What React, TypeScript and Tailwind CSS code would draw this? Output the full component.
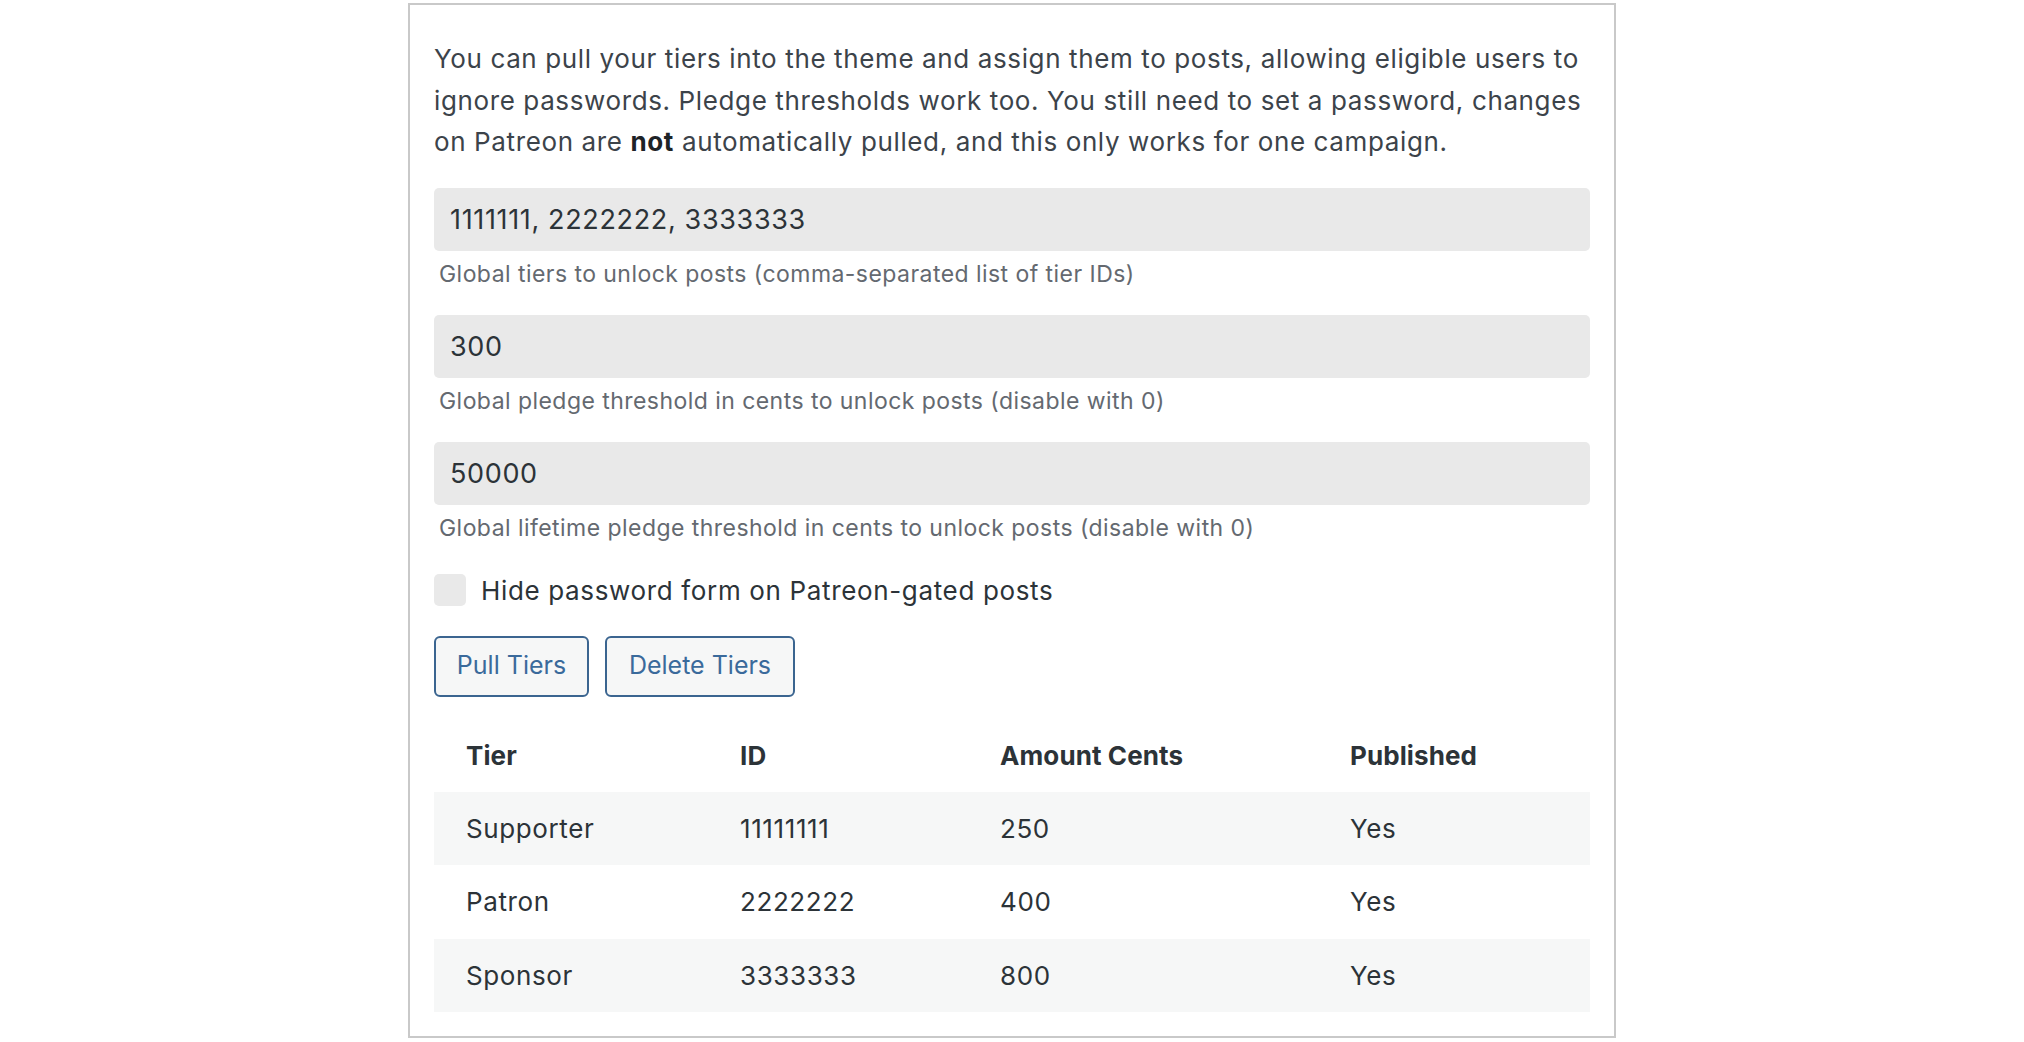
import React from "react";

type Tier = {
  name: string;
  id: string;
  amount: string;
  published: string;
};

const tiers: Tier[] = [
  { name: "Supporter", id: "11111111", amount: "250", published: "Yes" },
  { name: "Patron", id: "2222222", amount: "400", published: "Yes" },
  { name: "Sponsor", id: "3333333", amount: "800", published: "Yes" },
];

const Field: React.FC<{ value: string; help: string }> = ({ value, help }) => {
  return (
    <div className="flex flex-col">
      <div className="h-[63px] rounded-[5px] bg-[#e9e9e9] pl-[16px] pt-[2px] flex items-center text-[27px] tracking-[0.65px] text-[#2c3338]">
        {value}
      </div>
      <p className="mt-[6px] pl-[5px] text-[23px] tracking-[0.45px] leading-[34px] text-[#646970]">{help}</p>
    </div>
  );
};

const App: React.FC = () => {
  return (
    <div className="min-h-screen bg-white pt-[3px] font-['Inter','Liberation_Sans',sans-serif]">
      <div className="mx-auto w-[1208px] border-2 border-[#c9c9c9] bg-white px-[24px] pt-[33px] pb-[24px]">
        <p className="text-[26px] tracking-[0.62px] leading-[41.5px] text-[#3c434a]">
          <span className="block whitespace-nowrap">
            You can pull your tiers into the theme and assign them to posts, allowing eligible users to
          </span>
          <span className="block whitespace-nowrap">
            ignore passwords. Pledge thresholds work too. You still need to set a password, changes
          </span>
          <span className="block whitespace-nowrap">
            on Patreon are <strong className="font-bold text-[#1d2327]">not</strong> automatically pulled, and this only works for one campaign.
          </span>
        </p>

        <div className="mt-[25px] flex flex-col gap-[24px]">
          <Field value="1111111, 2222222, 3333333" help="Global tiers to unlock posts (comma-separated list of tier IDs)" />
          <Field value="300" help="Global pledge threshold in cents to unlock posts (disable with 0)" />
          <Field value="50000" help="Global lifetime pledge threshold in cents to unlock posts (disable with 0)" />
        </div>

        <label className="mt-[26px] flex items-center gap-[15px]">
          <span className="w-[32px] h-[32px] rounded-[5px] bg-[#e9e9e9]" />
          <span className="text-[26px] tracking-[0.65px] text-[#2c3338]">Hide password form on Patreon-gated posts</span>
        </label>

        <div className="mt-[26px] flex gap-[16px]">
          <button className="h-[61px] w-[155px] rounded-[6px] border-2 border-[#3b6590] bg-[#f6f7f7] text-[25px] text-[#3a6a9b]">
            Pull Tiers
          </button>
          <button className="h-[61px] w-[190px] rounded-[6px] border-2 border-[#3b6590] bg-[#f6f7f7] text-[25px] text-[#3a6a9b]">
            Delete Tiers
          </button>
        </div>

        <div className="mt-[22px] text-[26px] text-[#2c3338]">
          <div className="grid grid-cols-[274px_260px_350px_1fr] h-[73px] items-center font-bold tracking-[0.1px] text-[#2c3338]">
            <div className="pl-[32px]">Tier</div>
            <div className="pl-[32px]">ID</div>
            <div className="pl-[32px]">Amount Cents</div>
            <div className="pl-[32px]">Published</div>
          </div>
          {tiers.map((t, i) => (
            <div
              key={t.id}
              className={
                i % 2 === 0
                  ? "grid grid-cols-[274px_260px_350px_1fr] h-[73.5px] items-center tracking-[0.6px] bg-[#f6f7f7]"
                  : "grid grid-cols-[274px_260px_350px_1fr] h-[73.5px] items-center tracking-[0.6px] bg-white"
              }
            >
              <div className="pl-[32px]">{t.name}</div>
              <div className="pl-[32px]">{t.id}</div>
              <div className="pl-[32px]">{t.amount}</div>
              <div className="pl-[32px]">{t.published}</div>
            </div>
          ))}
        </div>
      </div>
    </div>
  );
};

export default App;
